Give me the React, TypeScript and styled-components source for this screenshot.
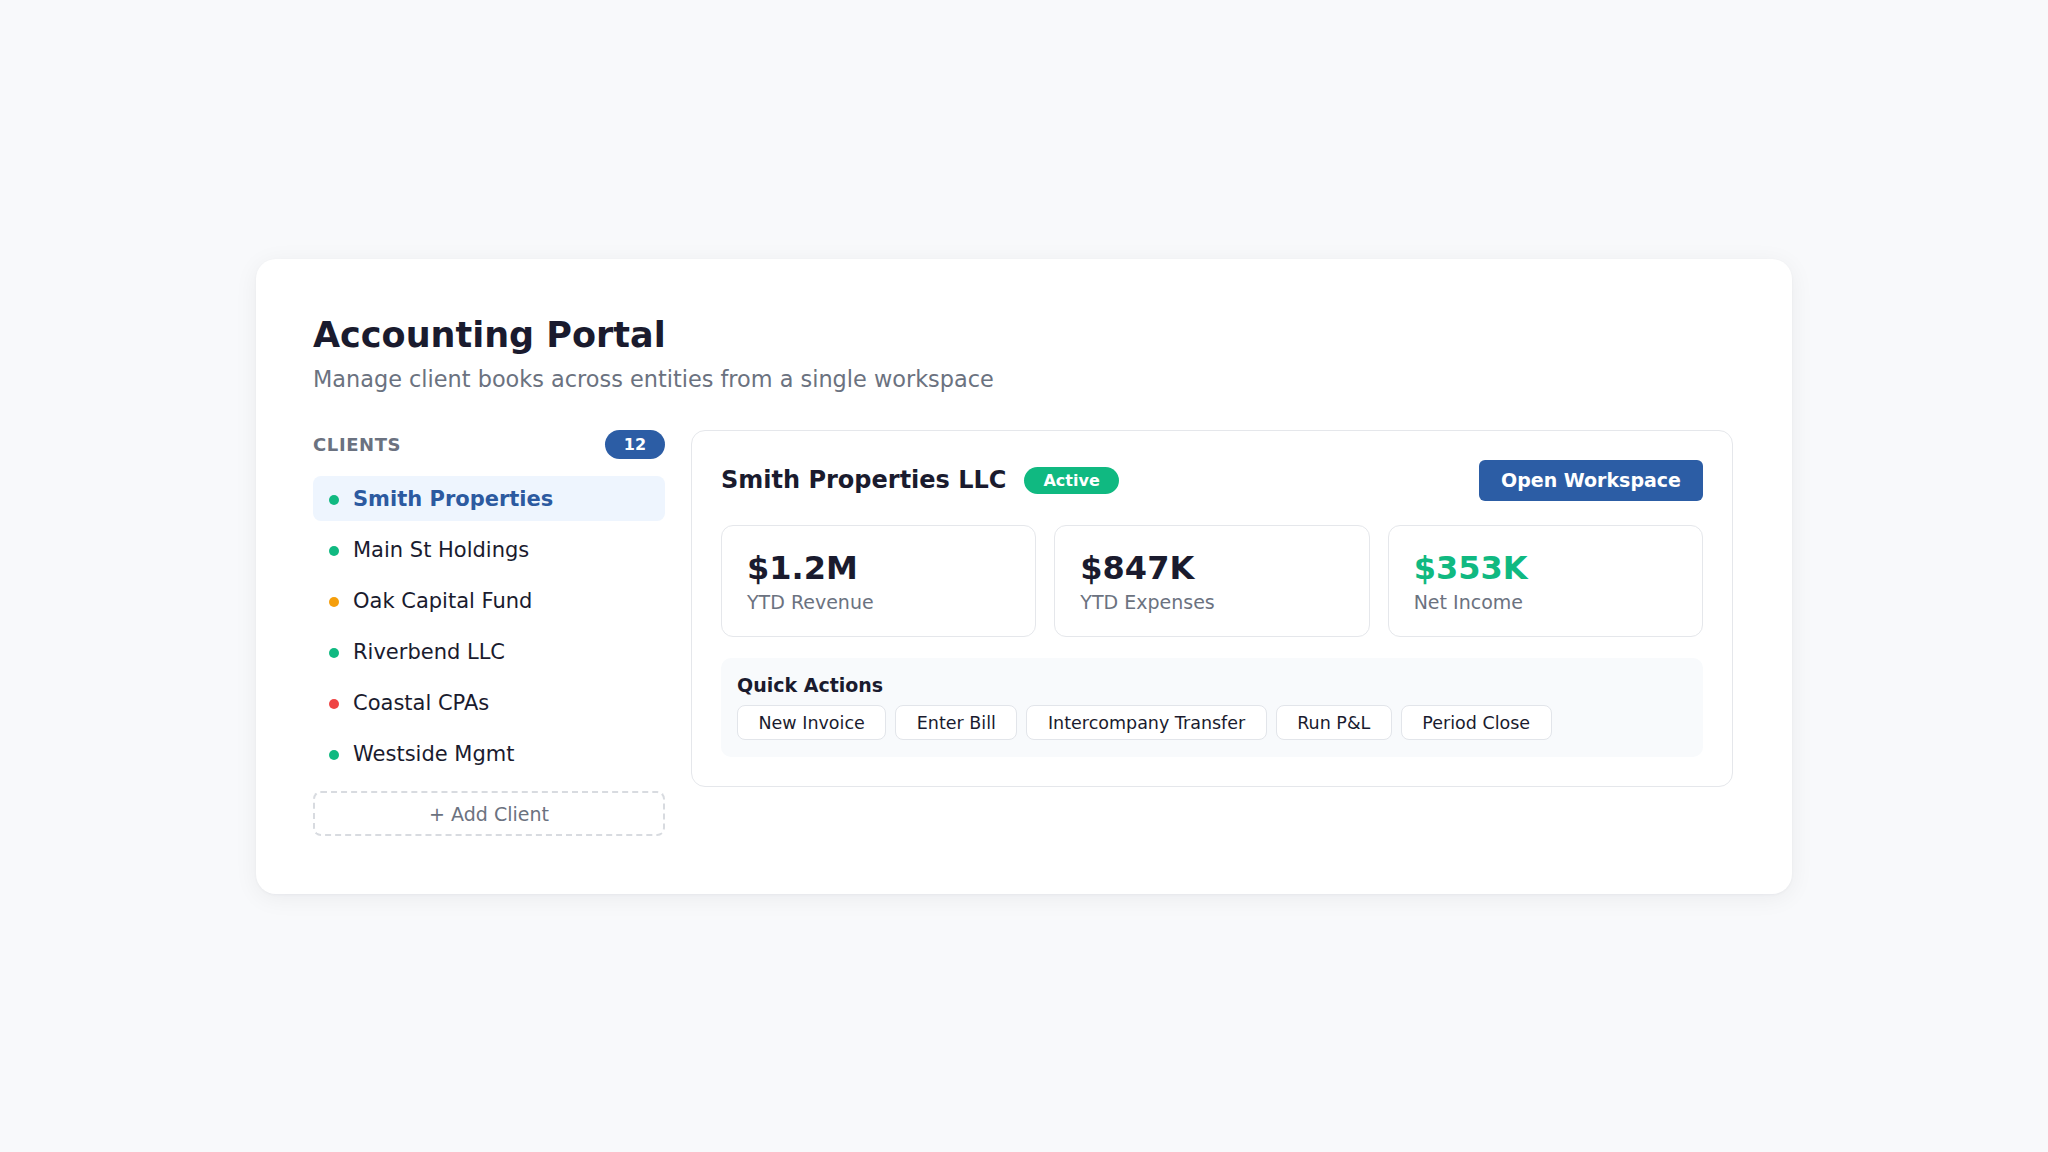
import React, { FC } from 'react';
import styled, { createGlobalStyle } from 'styled-components';

const GlobalStyle = createGlobalStyle`
	html, body {
		margin: 0;
		padding: 0;
		background: #f8f9fb;
		font-family: 'DejaVu Sans', 'Liberation Sans', sans-serif;
		color: #1a1b2e;
	}
`;

type Status = 'ok' | 'warn' | 'bad';

const clients: { name: string; status: Status }[] = [
	{ name: 'Smith Properties', status: 'ok' },
	{ name: 'Main St Holdings', status: 'ok' },
	{ name: 'Oak Capital Fund', status: 'warn' },
	{ name: 'Riverbend LLC', status: 'ok' },
	{ name: 'Coastal CPAs', status: 'bad' },
	{ name: 'Westside Mgmt', status: 'ok' },
];

const metrics = [
	{ value: '$1.2M', label: 'YTD Revenue', positive: false },
	{ value: '$847K', label: 'YTD Expenses', positive: false },
	{ value: '$353K', label: 'Net Income', positive: true },
];

const actions = ['New Invoice', 'Enter Bill', 'Intercompany Transfer', 'Run P&L', 'Period Close'];

const statusColors: Record<Status, string> = {
	ok: '#10b981',
	warn: '#f59e0b',
	bad: '#ef4444',
};

const App: FC = () => {
	return (
		<Page>
			<GlobalStyle />
			<Card>
				<Title>Accounting Portal</Title>
				<Subtitle>Manage client books across entities from a single workspace</Subtitle>

				<Layout>
					<Sidebar>
						<SidebarHeader>
							<SectionLabel>Clients</SectionLabel>
							<CountBadge>12</CountBadge>
						</SidebarHeader>

						<ClientList>
							{clients.map((c, i) => (
								<ClientRow key={c.name} $active={i === 0}>
									<Dot $color={statusColors[c.status]} />
									{c.name}
								</ClientRow>
							))}
						</ClientList>

						<AddClient type="button">+ Add Client</AddClient>
					</Sidebar>

					<Panel>
						<PanelHeader>
							<PanelTitle>
								Smith Properties LLC
								<StatusPill>Active</StatusPill>
							</PanelTitle>
							<PrimaryButton type="button">Open Workspace</PrimaryButton>
						</PanelHeader>

						<Metrics>
							{metrics.map((m) => (
								<MetricCard key={m.label}>
									<MetricValue $positive={m.positive}>{m.value}</MetricValue>
									<MetricLabel>{m.label}</MetricLabel>
								</MetricCard>
							))}
						</Metrics>

						<QuickActions>
							<QuickTitle>Quick Actions</QuickTitle>
							<ActionRow>
								{actions.map((a) => (
									<ActionButton key={a} type="button">
										{a}
									</ActionButton>
								))}
							</ActionRow>
						</QuickActions>
					</Panel>
				</Layout>
			</Card>
		</Page>
	);
};

export default App;

const Page = styled.div`
	min-height: 1152px;
	box-sizing: border-box;
	padding-top: 259px;
	display: flex;
	justify-content: center;
	align-items: flex-start;
`;

const Card = styled.div`
	width: 1536px;
	box-sizing: border-box;
	padding: 55px 59px 58px 57px;
	background: #ffffff;
	border-radius: 20px;
	box-shadow: 0 4px 24px rgba(15, 23, 42, 0.06), 0 1px 3px rgba(15, 23, 42, 0.04);
`;

const Title = styled.h1`
	margin: 0;
	font-size: 35px;
	font-weight: 700;
	line-height: 42px;
	color: #1a1b2e;
`;

const Subtitle = styled.p`
	margin: 9px 0 0;
	font-size: 22.4px;
	line-height: 28px;
	color: #6b7280;
`;

const Layout = styled.div`
	display: grid;
	grid-template-columns: 352px 1fr;
	column-gap: 26px;
	margin-top: 37px;
	align-items: start;
`;

const Sidebar = styled.div`
	display: flex;
	flex-direction: column;
`;

const SidebarHeader = styled.div`
	display: flex;
	align-items: center;
	justify-content: space-between;
	height: 29px;
`;

const SectionLabel = styled.span`
	font-size: 18px;
	font-weight: 700;
	letter-spacing: 0.6px;
	text-transform: uppercase;
	color: #6b7280;
`;

const CountBadge = styled.span`
	display: inline-flex;
	align-items: center;
	justify-content: center;
	width: 60px;
	height: 29px;
	border-radius: 999px;
	background: #2c5da5;
	color: #ffffff;
	font-size: 16px;
	font-weight: 700;
`;

const ClientList = styled.div`
	display: flex;
	flex-direction: column;
	gap: 6px;
	margin-top: 17px;
`;

const ClientRow = styled.div<{ $active?: boolean }>`
	display: flex;
	align-items: center;
	gap: 14px;
	height: 45px;
	padding: 0 16px;
	border-radius: 8px;
	font-size: 21px;
	font-weight: ${(p) => (p.$active ? 700 : 400)};
	color: ${(p) => (p.$active ? '#2c5aa0' : '#1a1b2e')};
	background: ${(p) => (p.$active ? '#eef5fe' : 'transparent')};
`;

const Dot = styled.span<{ $color: string }>`
	width: 10px;
	height: 10px;
	border-radius: 50%;
	background: ${(p) => p.$color};
	flex-shrink: 0;
	margin-top: 3px;
`;

const AddClient = styled.button`
	margin-top: 15px;
	height: 45px;
	border: 2px dashed #d8dbe0;
	border-radius: 8px;
	background: transparent;
	font-family: inherit;
	font-size: 19px;
	color: #6b7280;
	cursor: pointer;
`;

const Panel = styled.div`
	border: 1.5px solid #e5e7eb;
	border-radius: 14px;
	padding: 28px 29px 29px;
	display: flex;
	flex-direction: column;
`;

const PanelHeader = styled.div`
	display: flex;
	align-items: center;
	justify-content: space-between;
	height: 42px;
`;

const PanelTitle = styled.h2`
	margin: 0;
	display: flex;
	align-items: center;
	gap: 18px;
	font-size: 24px;
	font-weight: 700;
	color: #1a1b2e;
`;

const StatusPill = styled.span`
	display: inline-flex;
	align-items: center;
	height: 27px;
	padding: 0 19px;
	border-radius: 999px;
	background: #10b981;
	color: #ffffff;
	font-size: 16px;
	font-weight: 700;
`;

const PrimaryButton = styled.button`
	height: 41px;
	padding: 0 22px;
	border: none;
	border-radius: 6px;
	background: #2c5da5;
	color: #ffffff;
	font-family: inherit;
	font-size: 19px;
	font-weight: 700;
	cursor: pointer;
`;

const Metrics = styled.div`
	display: grid;
	grid-template-columns: repeat(3, 1fr);
	gap: 18px;
	margin-top: 24px;
`;

const MetricCard = styled.div`
	border: 1.5px solid #e5e7eb;
	border-radius: 12px;
	padding: 23px 25px 22px;
	display: flex;
	flex-direction: column;
`;

const MetricValue = styled.div<{ $positive?: boolean }>`
	font-size: 32px;
	font-weight: 700;
	line-height: 38px;
	color: ${(p) => (p.$positive ? '#10b981' : '#1a1b2e')};
`;

const MetricLabel = styled.div`
	margin-top: 4px;
	font-size: 19px;
	line-height: 23px;
	color: #6b7280;
`;

const QuickActions = styled.div`
	margin-top: 21px;
	padding: 16px 16px 17px;
	border-radius: 10px;
	background: #f8fafc;
	display: flex;
	flex-direction: column;
	gap: 8px;
`;

const QuickTitle = styled.div`
	font-size: 19px;
	font-weight: 700;
	line-height: 23px;
	color: #1a1b2e;
`;

const ActionRow = styled.div`
	display: flex;
	flex-wrap: wrap;
	gap: 9px;
`;

const ActionButton = styled.button`
	height: 35px;
	padding: 0 20.5px;
	border: 1.5px solid #e2e5ea;
	border-radius: 8px;
	background: #ffffff;
	font-family: inherit;
	font-size: 17.5px;
	color: #1a1b2e;
	cursor: pointer;
`;
